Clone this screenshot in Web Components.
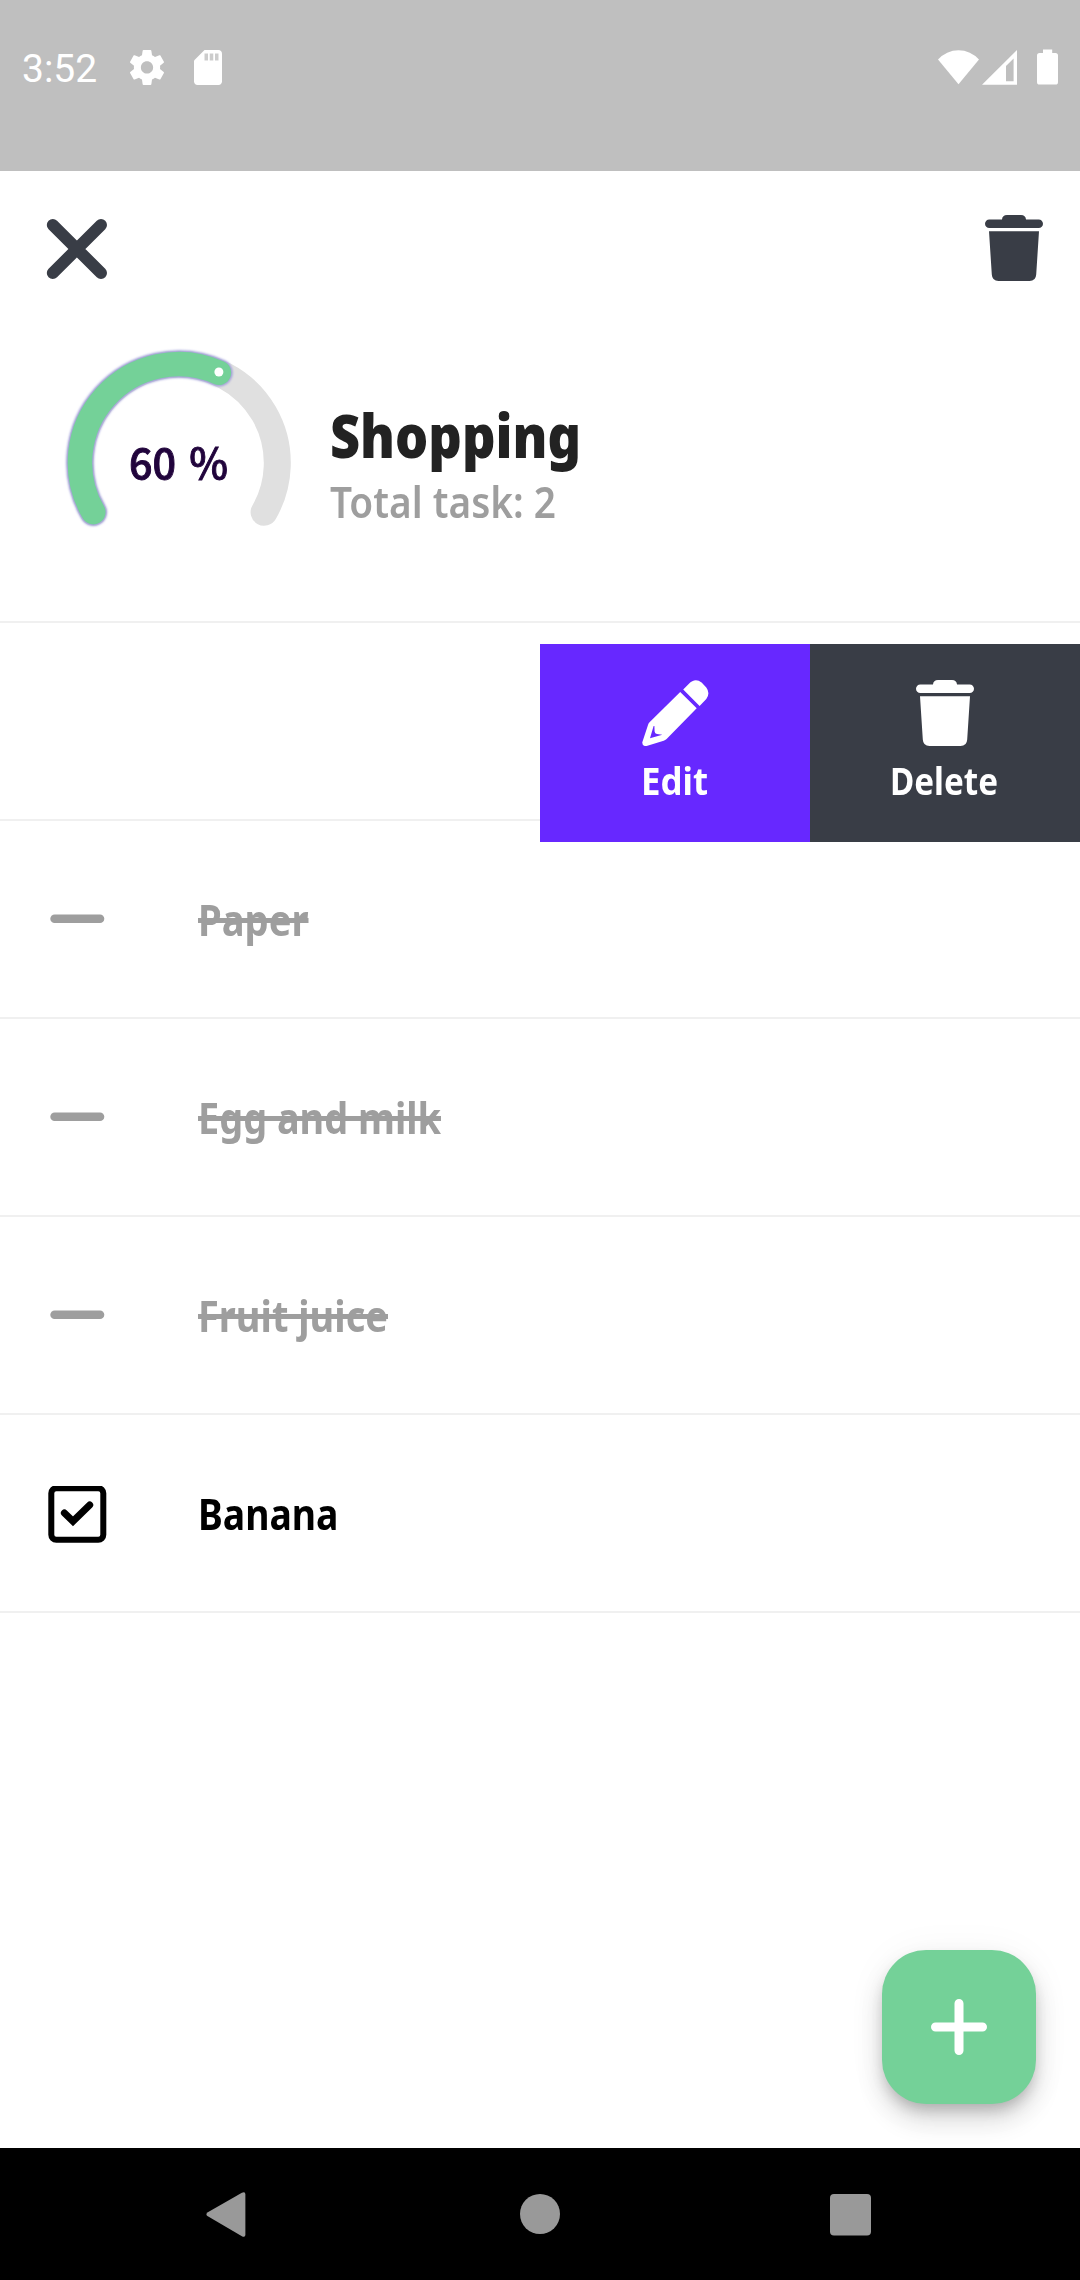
<!DOCTYPE html>
<html lang="en">
<head>
<meta charset="utf-8">
<title>Shopping</title>
<style>
html, body { margin: 0; padding: 0; background: #fff; }
body { font-family: "Noto Sans", "Open Sans", sans-serif; }
</style>
</head>
<body>
<shopping-app></shopping-app>

<script>
const define = (name, html, setup) => {
  const template = document.createElement('template');
  template.innerHTML = html;
  customElements.define(name, class extends HTMLElement {
    constructor() {
      super();
      this.attachShadow({ mode: 'open' }).append(template.content.cloneNode(true));
    }
    connectedCallback() { if (setup) setup(this, this.shadowRoot); }
  });
};

// A one-line label condensed or widened to a fixed advance width.
define('fit-text', `
  <style>
    :host { display: block; white-space: nowrap; flex: none; }
    span { display: inline-block; transform-origin: 0 50%; }
    :host([strike]) span { text-decoration: line-through; text-decoration-thickness: 4.5px; text-decoration-skip-ink: none; }
  </style>
  <span></span>`, (el, root) => {
    const span = root.querySelector('span');
    span.textContent = el.getAttribute('text');
    const w = +el.getAttribute('width');
    el.style.width = w + 'px';
    span.style.transform = 'scaleX(' + w / span.getBoundingClientRect().width + ')';
  });

define('trash-icon', `
  <style>:host { display: block; width: 58px; height: 66px; } svg { display: block; }</style>
  <svg width="58" height="66" viewBox="0 0 58 66" fill="currentColor">
    <path d="M4.3 4.4H17C17.2 1.6 19 0 22 0H36C39 0 40.8 1.6 41 4.4H53.7A4.2 4.2 0 0 1 53.7 13H4.3A4.2 4.2 0 0 1 4.3 4.4Z"/>
    <path d="M4 16.3H54L51.2 59.5Q50.8 66 44.5 66H13.5Q7.2 66 6.8 59.5Z"/>
  </svg>`);

define('pencil-icon', `
  <style>:host { display: block; width: 67px; height: 66px; } svg { display: block; }</style>
  <svg width="67" height="66" viewBox="0 0 67 66" fill="currentColor">
    <path d="M41.2 9.5L46.7 4Q53 -2.6 59.6 2.5L64.3 7.5Q68.5 13.2 64.3 19L57.6 25.9Z"/>
    <path fill-rule="evenodd" d="M38.2 12L54.7 28.3L24.6 58.9Q23.2 60.2 21.7 60.7L4.6 66Q0 66.6 .3 62.2L6 44.9Q6.5 43.2 7.8 42ZM11.6 46L8 58.2L20.3 54.7L15 54Q12.8 53.8 12.6 51.5L12.4 46Z"/>
  </svg>`);

define('status-bar', `
  <style>
    :host { display: flex; height: 171px; box-sizing: border-box; padding: 45px 22px 0; background: #bfbfbf; color: #fff; align-items: flex-start; }
    .time { width: 103.5px; font: 400 39px/49px Roboto, sans-serif; }
    svg { display: block; flex: none; }
    .sd { margin-left: 19px; }
    .right { margin-left: auto; }
  </style>
  <div class="time">3:52</div>
  <svg width="42" height="42" viewBox="0 -.8 24 24" fill="currentColor"><path d="M19.43 12.98c.04-.32.07-.64.07-.98s-.03-.66-.07-.98l2.11-1.65c.19-.15.24-.42.12-.64l-2-3.46c-.12-.22-.39-.3-.61-.22l-2.49 1c-.52-.4-1.08-.73-1.69-.98l-.38-2.65C14.46 2.18 14.25 2 14 2h-4c-.25 0-.46.18-.49.42l-.38 2.65c-.61.25-1.17.59-1.69.98l-2.49-1c-.23-.09-.49 0-.61.22l-2 3.46c-.13.22-.07.49.12.64l2.11 1.65c-.04.32-.07.65-.07.98s.03.66.07.98l-2.11 1.65c-.19.15-.24.42-.12.64l2 3.46c.12.22.39.3.61.22l2.49-1c.52.4 1.08.73 1.69.98l.38 2.65c.03.24.24.42.49.42h4c.25 0 .46-.18.49-.42l.38-2.65c.61-.25 1.17-.59 1.69-.98l2.49 1c.23.09.49 0 .61-.22l2-3.46c.12-.22.07-.49-.12-.64l-2.11-1.65zM12 15.5c-1.93 0-3.5-1.57-3.5-3.5s1.57-3.5 3.5-3.5 3.5 1.57 3.5 3.5-1.57 3.5-3.5 3.5z"/></svg>
  <svg class="sd" width="42" height="42" viewBox="0 -.8 24 24" fill="currentColor"><path d="M18 2h-8L4 8v12c0 1.1.9 2 2 2h12c1.1 0 2-.9 2-2V4c0-1.1-.9-2-2-2z"/><path fill="#bfbfbf" fill-opacity=".8" d="M10 4h2v4h-2zM13 4h2v4h-2zM16 4h2v4h-2z"/></svg>
  <svg class="right" width="120" height="42" viewBox="938 45 120 42" fill="currentColor">
    <path d="M938 59.5A27.5 27.5 0 0 1 979 59.5L958.5 84.3Z"/>
    <path fill-rule="evenodd" d="M982 84.8L1017 50V84.8ZM1006 66V81.3H1013.6V58.5Z"/>
    <path d="M1043 53V49.5H1052.2V53H1055.5Q1058 53 1058 55.5V82Q1058 84.6 1055.5 84.6H1039.5Q1037 84.6 1037 82V55.5Q1037 53 1039.5 53Z"/>
  </svg>`);

define('top-actions', `
  <style>
    :host { display: flex; justify-content: space-between; align-items: flex-start; height: 149px; box-sizing: border-box; padding: 44px 37px 0 46px; color: #393d46; }
    svg { display: block; margin-top: 3px; }
  </style>
  <svg width="62" height="62" viewBox="0 0 62 62" fill="none" stroke="currentColor" stroke-width="12" stroke-linecap="round"><path d="M6.8 7L55 55M55 7L6.8 55"/></svg>
  <trash-icon></trash-icon>`);

define('progress-gauge', `
  <style>
    :host { display: grid; width: 230px; height: 190px; flex: none; }
    svg, .label { grid-area: 1 / 1; }
    .label { padding: 91px 0 0 65px; font: 500 42px/60px "Noto Sans CJK JP", "Noto Sans", sans-serif; word-spacing: 4px; color: #21043c; -webkit-text-stroke: .9px #21043c; }
  </style>
  <svg width="230" height="190" viewBox="64 340 230 190" fill="none" stroke-linecap="round">
    <defs><filter id="halo" x="-20%" y="-20%" width="140%" height="140%"><feGaussianBlur stdDeviation="1.2"/></filter></defs>
    <path stroke="#e0e0e0" stroke-width="27" d="M93.3 512.2A98.6 98.6 0 1 1 264.1 512.2"/>
    <path stroke="#a09fd8" stroke-width="27.5" filter="url(#halo)" d="M93.3 512.2A98.6 98.6 0 0 1 218.9 372.7"/>
    <path stroke="#74d198" stroke-width="24.5" d="M93.3 512.2A98.6 98.6 0 0 1 218.9 372.7"/>
    <circle cx="218.9" cy="372" r="4.5" fill="#fff"/>
  </svg>
  <div class="label"><fit-text text="60 %" width="99"></fit-text></div>`);

define('list-header', `
  <style>
    :host { display: flex; height: 303px; box-sizing: border-box; border-bottom: 2px solid #f0f0f0; padding: 20px 0 0 64px; }
    .titles { padding: 60px 0 0 36px; }
    .title { font-size: 60px; line-height: 70px; font-weight: 900; color: #222; }
    .sub { font-size: 43px; line-height: 60px; font-weight: 640; color: #9e9e9e; margin-top: 2px; }
  </style>
  <progress-gauge></progress-gauge>
  <div class="titles">
    <fit-text class="title" text="Shopping" width="251"></fit-text>
    <fit-text class="sub" text="Total task: 2" width="226"></fit-text>
  </div>`);

define('task-row', `
  <style>
    :host { display: flex; align-items: flex-start; height: 198px; box-sizing: border-box; border-bottom: 2px solid #f0f0f0; font-size: 43px; line-height: 60px; font-weight: 690; color: #000; }
    :host([done]) { color: #9e9e9e; }
    .mark { width: 198px; padding: 71px 0 0 48px; box-sizing: border-box; }
    .box, :host([done]) .dash { display: block; }
    .dash, :host([done]) .box { display: none; }
    fit-text { margin-top: 69px; }
  </style>
  <div class="mark">
    <svg class="box" width="59" height="59" viewBox="0 2.8 59 59" fill="none" stroke="currentColor">
      <rect x="3.3" y="5" width="52" height="51.6" rx="5" stroke-width="6"/>
      <path d="M16.4 29.7L25 38.1L41.7 21.7" stroke-width="7" stroke-linecap="round"/>
    </svg>
    <svg class="dash" width="59" height="59" viewBox="0 0 59 59" fill="currentColor"><rect x="2.3" y="22.5" width="54" height="8.6" rx="4.3"/></svg>
  </div>
  <fit-text></fit-text>`);

customElements.define('task-item', class extends HTMLElement {
  connectedCallback() {
    const root = this.attachShadow({ mode: 'open' });
    const row = document.createElement('task-row');
    row.toggleAttribute('done', this.hasAttribute('done'));
    const label = row.shadowRoot.querySelector('fit-text');
    label.setAttribute('text', this.getAttribute('text'));
    label.setAttribute('width', this.getAttribute('width'));
    label.toggleAttribute('strike', this.hasAttribute('done'));
    root.innerHTML = '<style>:host { display: block; }</style>';
    root.append(row);
  }
});

define('action-button', `
  <style>
    :host { display: flex; flex-direction: column; align-items: center; width: 270px; height: 198px; box-sizing: border-box; padding-top: 36px; color: #fff; font-size: 37px; line-height: 50px; font-weight: 700; }
    .text { margin-top: 10px; padding-right: 2px; }
  </style>
  <slot></slot>
  <div class="text"><slot name="label"></slot></div>`);

define('swiped-row', `
  <style>
    :host { display: block; position: relative; height: 198px; box-sizing: border-box; border-bottom: 2px solid #f0f0f0; }
    .actions { position: absolute; z-index: 1; right: 0; top: 21px; display: flex; }
    .edit { background: #6728ff; }
    .delete { background: #393d46; }
  </style>
  <div class="actions">
    <action-button class="edit"><pencil-icon></pencil-icon><fit-text slot="label" text="Edit" width="67"></fit-text></action-button>
    <action-button class="delete"><trash-icon></trash-icon><fit-text slot="label" text="Delete" width="108"></fit-text></action-button>
  </div>`);

define('add-button', `
  <style>
    :host { display: flex; align-items: center; justify-content: center; width: 154px; height: 154px; border-radius: 44px; background: #74d198; box-shadow: 0 8px 14px -3px rgba(0,0,0,.2), 0 16px 27px rgba(0,0,0,.14), 0 3px 40px rgba(0,0,0,.05); }
  </style>
  <svg width="56" height="56" viewBox="0 0 56 56" stroke="#fff" stroke-width="9" stroke-linecap="round"><path d="M28 4.5V51.5M4.5 28H51.5"/></svg>`);

define('nav-bar', `
  <style>
    :host { display: flex; height: 132px; box-sizing: border-box; background: #000; padding: 43px 208px 0 205px; justify-content: space-between; position: relative; z-index: 1; }
    svg { display: block; }
  </style>
  <svg width="42" height="48" viewBox="-.4 0 42 48" fill="#999"><path d="M2 21.4L36.5 1.7Q40 0 40 3.5V43.5Q40 47 36.5 45.3L2 25Q0 23.2 2 21.4Z"/></svg>
  <svg width="42" height="48" viewBox="0 0 42 48" fill="#999" overflow="visible"><circle cx="22" cy="23" r="20"/></svg>
  <svg width="42" height="48" viewBox="0 0 42 48" fill="#999"><rect x="0" y="3" width="41" height="41.5" rx="4"/></svg>`);

define('shopping-app', `
  <style>
    :host { display: flex; flex-direction: column; width: 1080px; height: 2280px; background: #fff; overflow: hidden; }
    .fab { margin-top: auto; display: flex; justify-content: flex-end; padding: 0 44px 44px 0; }
  </style>
  <status-bar></status-bar>
  <top-actions></top-actions>
  <list-header></list-header>
  <swiped-row></swiped-row>
  <task-item done text="Paper" width="110.5"></task-item>
  <task-item done text="Egg and milk" width="243"></task-item>
  <task-item done text="Fruit juice" width="190"></task-item>
  <task-item text="Banana" width="140.5"></task-item>
  <div class="fab"><add-button></add-button></div>
  <nav-bar></nav-bar>`);
</script>
</body>
</html>
